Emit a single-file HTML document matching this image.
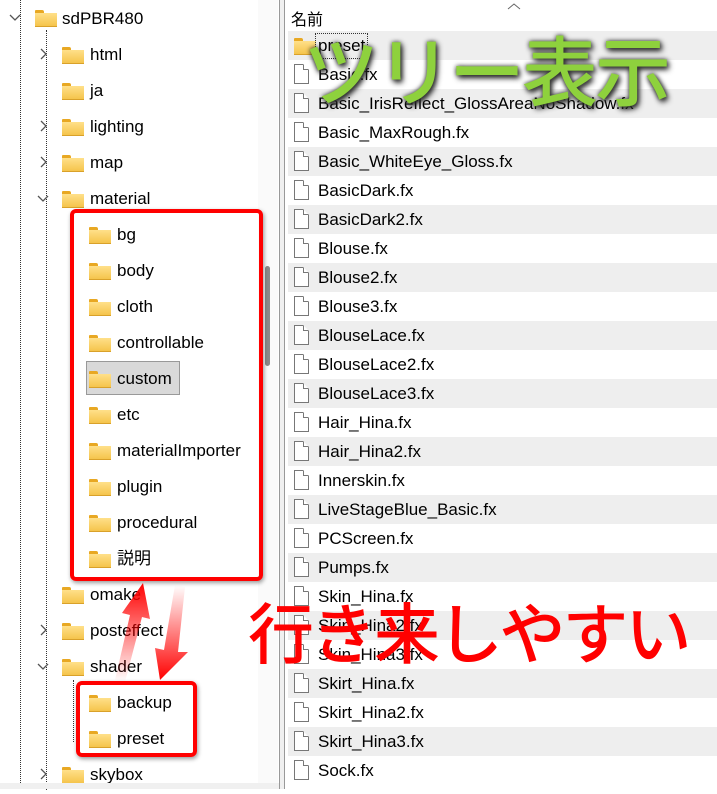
<!DOCTYPE html>
<html><head><meta charset="utf-8"><style>
body{margin:0;width:717px;height:789px;overflow:hidden;background:#fff;font-family:"Segoe UI","Liberation Sans","Noto Sans CJK JP",sans-serif;font-size:17px;color:#000;position:relative}
.a{position:absolute}
.t{position:absolute;height:36px;line-height:38px;white-space:nowrap}
.f{position:absolute;width:22px;height:17px;margin-top:1px}
.f:before{content:"";position:absolute;left:0;top:0;width:9px;height:4px;background:#e8a823;border-radius:1px 2px 0 0}
.f:after{content:"";position:absolute;left:0;top:3px;width:22px;height:14px;background:linear-gradient(#ffe08a,#f5c44c);border-bottom:1px solid #d9a12a;box-sizing:border-box}
.r{position:absolute;left:288px;width:429px;height:29px;line-height:30px}
.g{background:#eeeeee}
.d{position:absolute;left:6px;top:4px;width:15px;height:20px;border:1px solid #777;box-sizing:border-box;background:#fff;clip-path:polygon(0 0,9px 0,15px 6px,15px 20px,0 20px)}
.d:after{content:"";position:absolute;right:-1px;top:-1px;width:6px;height:6px;border-left:1px solid #777;border-bottom:1px solid #777;box-sizing:border-box}
.r span{position:absolute;left:30px}
.vl{position:absolute;border-left:1px dotted #333;width:0}
</style></head><body>
<div class="vl" style="left:20px;top:0;height:789px"></div>
<div class="vl" style="left:46px;top:30px;height:760px"></div>
<div class="vl" style="left:73px;top:212px;height:360px"></div>
<div class="vl" style="left:73px;top:680px;height:62px"></div>
<svg class="a" style="left:0;top:0" width="280" height="789">
<g fill="none" stroke="#555" stroke-width="1.3">
<path d="M10 15l5 5 5-5"/>
<path d="M41 49l5 5-5 5"/><path d="M41 121l5 5-5 5"/><path d="M41 157l5 5-5 5"/>
<path d="M38 196l5 5 5-5"/>
<path d="M41 625l5 5-5 5"/><path d="M38 664l5 5 5-5"/><path d="M41 769l5 5-5 5"/>
</g></svg>
<div class="f" style="left:35px;top:9px"></div><div class="t" style="left:62px;top:0">sdPBR480</div>
<div class="f" style="left:62px;top:46px"></div><div class="t" style="left:90px;top:36px">html</div>
<div class="f" style="left:62px;top:82px"></div><div class="t" style="left:90px;top:72px">ja</div>
<div class="f" style="left:62px;top:118px"></div><div class="t" style="left:90px;top:108px">lighting</div>
<div class="f" style="left:62px;top:154px"></div><div class="t" style="left:90px;top:144px">map</div>
<div class="f" style="left:62px;top:190px"></div><div class="t" style="left:90px;top:180px">material</div>
<div class="a" style="left:86px;top:361px;width:94px;height:34px;background:#d9d9d9;border:1px solid #999;box-sizing:border-box"></div>
<div class="f" style="left:89px;top:226px"></div><div class="t" style="left:117px;top:216px">bg</div>
<div class="f" style="left:89px;top:262px"></div><div class="t" style="left:117px;top:252px">body</div>
<div class="f" style="left:89px;top:298px"></div><div class="t" style="left:117px;top:288px">cloth</div>
<div class="f" style="left:89px;top:334px"></div><div class="t" style="left:117px;top:324px">controllable</div>
<div class="f" style="left:89px;top:370px"></div><div class="t" style="left:117px;top:360px">custom</div>
<div class="f" style="left:89px;top:406px"></div><div class="t" style="left:117px;top:396px">etc</div>
<div class="f" style="left:89px;top:442px"></div><div class="t" style="left:117px;top:432px">materialImporter</div>
<div class="f" style="left:89px;top:478px"></div><div class="t" style="left:117px;top:468px">plugin</div>
<div class="f" style="left:89px;top:514px"></div><div class="t" style="left:117px;top:504px">procedural</div>
<div class="f" style="left:89px;top:550px"></div><div class="t" style="left:117px;top:540px">説明</div>
<div class="f" style="left:62px;top:586px"></div><div class="t" style="left:90px;top:576px">omake</div>
<div class="f" style="left:62px;top:622px"></div><div class="t" style="left:90px;top:612px">posteffect</div>
<div class="f" style="left:62px;top:658px"></div><div class="t" style="left:90px;top:648px">shader</div>
<div class="f" style="left:89px;top:694px"></div><div class="t" style="left:117px;top:684px">backup</div>
<div class="f" style="left:89px;top:730px"></div><div class="t" style="left:117px;top:720px">preset</div>
<div class="f" style="left:62px;top:766px"></div><div class="t" style="left:90px;top:756px">skybox</div>
<div class="a" style="left:258px;top:0;width:20px;height:789px;background:#fafafa"></div>
<div class="a" style="left:265px;top:266px;width:5px;height:100px;background:#8a8a8a;border-radius:3px"></div>
<div class="a" style="left:0;top:783px;width:280px;height:6px;background:#f0f0f0"></div>
<div class="a" style="left:279px;top:0;width:6px;height:789px;background:#f0f0f0;border-left:1px solid #999;border-right:1px solid #999;box-sizing:border-box"></div>
<div class="a" style="left:291px;top:6px;font-size:16px">名前</div>
<svg class="a" style="left:507px;top:2px" width="14" height="8"><path d="M1 7l6-5 6 5" fill="none" stroke="#666"/></svg>
<div class="r g" style="top:31px"><div class="f" style="left:6px;top:6px"></div><span style="outline:1px dotted #333;left:28px;padding:0 2px;line-height:24px;top:3px">preset</span></div>
<div class="r" style="top:60px"><div class="d"></div><span>Basic.fx</span></div>
<div class="r g" style="top:89px"><div class="d"></div><span>Basic_IrisReflect_GlossAreaNoShadow.fx</span></div>
<div class="r" style="top:118px"><div class="d"></div><span>Basic_MaxRough.fx</span></div>
<div class="r g" style="top:147px"><div class="d"></div><span>Basic_WhiteEye_Gloss.fx</span></div>
<div class="r" style="top:176px"><div class="d"></div><span>BasicDark.fx</span></div>
<div class="r g" style="top:205px"><div class="d"></div><span>BasicDark2.fx</span></div>
<div class="r" style="top:234px"><div class="d"></div><span>Blouse.fx</span></div>
<div class="r g" style="top:263px"><div class="d"></div><span>Blouse2.fx</span></div>
<div class="r" style="top:292px"><div class="d"></div><span>Blouse3.fx</span></div>
<div class="r g" style="top:321px"><div class="d"></div><span>BlouseLace.fx</span></div>
<div class="r" style="top:350px"><div class="d"></div><span>BlouseLace2.fx</span></div>
<div class="r g" style="top:379px"><div class="d"></div><span>BlouseLace3.fx</span></div>
<div class="r" style="top:408px"><div class="d"></div><span>Hair_Hina.fx</span></div>
<div class="r g" style="top:437px"><div class="d"></div><span>Hair_Hina2.fx</span></div>
<div class="r" style="top:466px"><div class="d"></div><span>Innerskin.fx</span></div>
<div class="r g" style="top:495px"><div class="d"></div><span>LiveStageBlue_Basic.fx</span></div>
<div class="r" style="top:524px"><div class="d"></div><span>PCScreen.fx</span></div>
<div class="r g" style="top:553px"><div class="d"></div><span>Pumps.fx</span></div>
<div class="r" style="top:582px"><div class="d"></div><span>Skin_Hina.fx</span></div>
<div class="r g" style="top:611px"><div class="d"></div><span>Skin_Hina2.fx</span></div>
<div class="r" style="top:640px"><div class="d"></div><span>Skin_Hina3.fx</span></div>
<div class="r g" style="top:669px"><div class="d"></div><span>Skirt_Hina.fx</span></div>
<div class="r" style="top:698px"><div class="d"></div><span>Skirt_Hina2.fx</span></div>
<div class="r g" style="top:727px"><div class="d"></div><span>Skirt_Hina3.fx</span></div>
<div class="r" style="top:756px"><div class="d"></div><span>Sock.fx</span></div>
<div class="a" style="left:70px;top:209px;width:193px;height:372px;border:4px solid #f00;border-radius:6px;box-sizing:border-box;box-shadow:1px 2px 4px rgba(0,0,0,.4)"></div>
<div class="a" style="left:76px;top:681px;width:121px;height:76px;border:4px solid #f00;border-radius:6px;box-sizing:border-box;box-shadow:1px 2px 4px rgba(0,0,0,.4)"></div>
<svg class="a" style="left:100px;top:580px" width="100" height="110">
<defs><linearGradient id="u" x1="0" y1="1" x2="0" y2="0"><stop offset="0" stop-color="#f00" stop-opacity="0"/><stop offset="1" stop-color="#f00"/></linearGradient>
<linearGradient id="w" x1="0" y1="0" x2="0" y2="1"><stop offset="0" stop-color="#f00" stop-opacity="0"/><stop offset="1" stop-color="#f00"/></linearGradient></defs>
<polygon points="15,100 30,35 22,33 43,3 50,39 42,37 25,102" fill="url(#u)"/>
<polygon points="75,5 64,70 55,68 60,100 88,72 78,72 85,7" fill="url(#w)"/>
</svg>
<div class="a" style="left:303px;top:22px;font-size:76px;line-height:90px;font-weight:500;color:#8ed13d;font-family:'Noto Sans CJK JP',sans-serif;text-shadow:0 0 5px #333,2px 3px 6px #222;white-space:nowrap;letter-spacing:-3px">ツリー表示</div>
<div class="a" style="left:248px;top:590px;font-size:66px;line-height:80px;font-weight:500;color:#f00;font-family:'Noto Sans CJK JP',sans-serif;white-space:nowrap;letter-spacing:-3px">行き来しやすい</div>
</body></html>
